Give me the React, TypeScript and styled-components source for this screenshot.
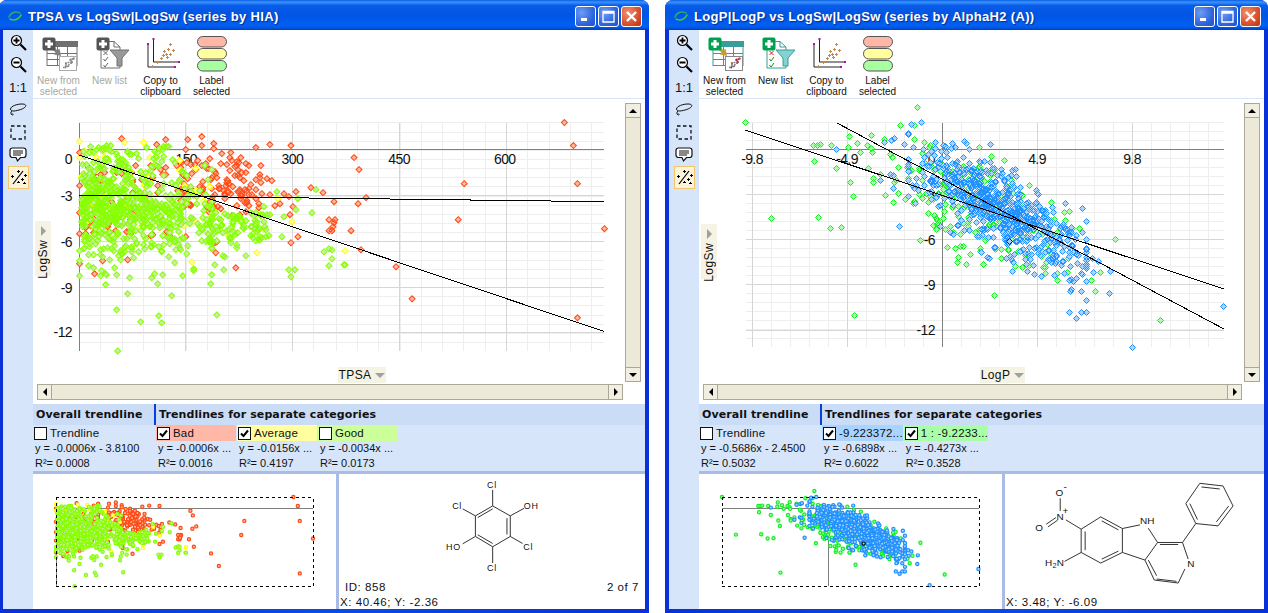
import React from "react";
import styled, { createGlobalStyle } from "styled-components";

type Pt = [number, number];
type Series = { stroke: string; fill: string; pts: Pt[] };

const Global = createGlobalStyle`
  html, body { margin: 0; padding: 0; background: #fff; overflow: hidden; }
  body { font-family: "Liberation Sans", Arial, sans-serif; }
`;

const Page = styled.div`
  display: flex;
  gap: 16px;
  width: 1269px;
  height: 613px;
  margin-left: -1px;
  overflow: hidden;
`;

const Win = styled.div<{ $w: number }>`
  display: flex;
  flex-direction: column;
  flex: 0 0 ${(p) => p.$w}px;
  height: 613px;
  border-radius: 8px 8px 0 0;
  overflow: hidden;
  background: linear-gradient(90deg, #0831d9 0, #0a4be6 50%, #0831d9 100%);
`;

const TitleBar = styled.div`
  display: flex;
  align-items: center;
  flex: 0 0 30px;
  box-sizing: border-box;
  padding: 2px 7px 0 9px;
  background: linear-gradient(180deg, #0a5fe0 0, #3a93ff 7%, #0a5ce8 18%, #0055e5 50%, #0060f2 85%, #0053e0 94%, #0039c8 100%);
`;

const TitleText = styled.span`
  flex: 1;
  margin-left: 6px;
  color: #fff;
  font: bold 13px "Liberation Sans", sans-serif;
  letter-spacing: 0.32px;
  white-space: nowrap;
  text-shadow: 1px 1px 1px #0a2a90;
`;

const CapButton = styled.div<{ $close?: boolean }>`
  flex: 0 0 21px;
  height: 21px;
  margin-left: 2px;
  box-sizing: border-box;
  border: 1px solid #fff;
  border-radius: 3px;
  background: ${(p) =>
    p.$close
      ? "radial-gradient(circle at 30% 30%, #f09070 0, #d8502c 60%, #b83010 100%)"
      : "radial-gradient(circle at 30% 30%, #6d9cf4 0, #2d62dc 65%, #2350c8 100%)"};
  display: flex;
  align-items: center;
  justify-content: center;
`;

const Body = styled.div`
  flex: 1;
  display: grid;
  grid-template-columns: 30px 1fr;
  margin: 0 4px 4px;
  min-height: 0;
`;

const SideBar = styled.div`
  display: flex;
  flex-direction: column;
  align-items: center;
  padding-top: 1px;
  background: #d6e5fa;
`;

const SideItem = styled.div<{ $active?: boolean }>`
  flex: 0 0 22.5px;
  width: 21px;
  box-sizing: border-box;
  display: flex;
  align-items: center;
  justify-content: center;
  color: #111;
  font-size: 13px;
  ${(p) => p.$active && "border: 1px solid #f6c46a; background: #fbf3dc;"}
`;

const Main = styled.div`
  display: flex;
  flex-direction: column;
  min-width: 0;
`;

const ToolBar = styled.div`
  display: flex;
  flex: 0 0 69px;
  box-sizing: border-box;
  background: #fff;
  border-bottom: 1px solid #d6e5fa;
`;

const ToolButton = styled.div<{ $off?: boolean }>`
  flex: 0 0 51px;
  display: flex;
  flex-direction: column;
  align-items: center;
  padding-top: 6px;
  box-sizing: border-box;
  color: ${(p) => (p.$off ? "#a8a8a0" : "#111")};
  font-size: 10px;
  line-height: 11px;
  text-align: center;
  svg { flex: 0 0 39px; display: block; }
`;

const PlotPane = styled.div`
  flex: 0 0 305px;
  box-sizing: border-box;
  display: grid;
  grid-template-columns: 1fr 16px;
  grid-template-rows: 1fr 16px;
  gap: 2px;
  padding: 4px;
  background: #fff;
`;

const ChartBox = styled.div`
  position: relative;
  min-width: 0;
  min-height: 0;
  svg { display: block; width: 100%; height: 100%; overflow: visible; }
`;

const AxisTagH = styled.div<{ $w: number; $right: number }>`
  position: absolute;
  bottom: -1px;
  right: ${(p) => p.$right}px;
  width: ${(p) => p.$w}px;
  height: 16px;
  background: #f5f3e3;
  display: flex;
  align-items: center;
  justify-content: center;
  gap: 4px;
  font-size: 12px;
  letter-spacing: 0.4px;
  color: #111;
`;

const AxisTagV = styled.div<{ $top: number }>`
  position: absolute;
  left: -2px;
  top: ${(p) => p.$top}px;
  width: 16px;
  height: 55px;
  background: #f5f3e3;
  display: flex;
  flex-direction: column;
  align-items: center;
  gap: 4px;
  padding-top: 5px;
  box-sizing: border-box;
  font-size: 12px;
  letter-spacing: 0.4px;
  color: #111;
  span { writing-mode: vertical-rl; transform: rotate(180deg); }
`;

const CaretDown = styled.i`
  width: 0;
  height: 0;
  border-left: 5px solid transparent;
  border-right: 5px solid transparent;
  border-top: 5px solid #a0a0a0;
`;

const CaretRight = styled.i`
  width: 0;
  height: 0;
  border-top: 5px solid transparent;
  border-bottom: 5px solid transparent;
  border-left: 5px solid #a0a0a0;
`;

const ScrollV = styled.div`
  display: flex;
  flex-direction: column;
  justify-content: space-between;
  box-sizing: border-box;
  border: 1px solid #aca899;
  background: #ece9d8;
`;

const ScrollH = styled.div`
  display: flex;
  justify-content: space-between;
  box-sizing: border-box;
  border: 1px solid #aca899;
  background: #ece9d8;
`;

const ScrollBtn = styled.div<{ $dir: "up" | "down" | "left" | "right"; }>`
  flex: 0 0 14px;
  height: 14px;
  box-sizing: border-box;
  background: #f1efe2;
  display: flex;
  align-items: center;
  justify-content: center;
  ${(p) => (p.$dir === "up" ? "border-bottom: 1px solid #aca899;" : "")}
  ${(p) => (p.$dir === "down" ? "border-top: 1px solid #aca899;" : "")}
  ${(p) => (p.$dir === "left" ? "border-right: 1px solid #aca899;" : "")}
  ${(p) => (p.$dir === "right" ? "border-left: 1px solid #aca899;" : "")}
  i {
    width: 0;
    height: 0;
    ${(p) => (p.$dir === "up" ? "border-left:4px solid transparent;border-right:4px solid transparent;border-bottom:4px solid #000;" : "")}
    ${(p) => (p.$dir === "down" ? "border-left:4px solid transparent;border-right:4px solid transparent;border-top:4px solid #000;" : "")}
    ${(p) => (p.$dir === "left" ? "border-top:4px solid transparent;border-bottom:4px solid transparent;border-right:4px solid #000;" : "")}
    ${(p) => (p.$dir === "right" ? "border-top:4px solid transparent;border-bottom:4px solid transparent;border-left:4px solid #000;" : "")}
  }
`;

const HeadRow = styled.div`
  flex: 0 0 21px;
  display: grid;
  grid-template-columns: 121px 1fr;
  gap: 2px;
`;

const HeadCell = styled.div`
  background: #cbdcf7;
  padding-left: 3px;
  display: flex;
  align-items: center;
  font: bold 11px "DejaVu Sans", sans-serif;
  letter-spacing: 0.1px;
  color: #111;
  white-space: nowrap;
`;

const TrendRow = styled.div`
  flex: 0 0 46px;
  display: flex;
  gap: 1px;
  background: #d6e5fa;
`;

const TrendCol = styled.div<{ $w: number }>`
  flex: 0 0 ${(p) => p.$w}px;
  font-size: 11px;
  color: #111;
  white-space: nowrap;
`;

const Legend = styled.div<{ $bg?: string }>`
  height: 16px;
  display: flex;
  align-items: center;
  gap: 3px;
  padding-left: 1px;
  background: ${(p) => p.$bg || "transparent"};
  font-size: 11.5px;
  letter-spacing: 0.2px;
`;

const Check = styled.div`
  flex: 0 0 13px;
  height: 13px;
  box-sizing: border-box;
  border: 1px solid #111;
  background: #fff;
  display: flex;
  align-items: center;
  justify-content: center;
`;

const EqLine = styled.div`
  height: 15px;
  line-height: 15px;
  padding-left: 2px;
`;

const Rule = styled.div`
  flex: 0 0 3px;
  background: #a9bce6;
`;

const Bottom = styled.div`
  flex: 1;
  display: grid;
  grid-template-columns: 303px 3px 1fr;
  min-height: 0;
  background: #fff;
`;

const MiniPane = styled.div`
  overflow: hidden;
  svg { display: block; }
`;

const VRule = styled.div`
  background: #a9bce6;
`;

const MolPane = styled.div`
  display: flex;
  flex-direction: column;
  min-width: 0;
  overflow: hidden;
  color: #111;
  font-size: 11.5px;
  letter-spacing: 0.55px;
`;

const MolPic = styled.div`
  flex: 1;
  display: flex;
  align-items: center;
  justify-content: center;
  min-height: 0;
`;

const InfoRow = styled.div`
  flex: 0 0 16px;
  display: flex;
  justify-content: space-between;
  align-items: center;
  padding: 0 6px;
`;

const Coord = styled.div`
  flex: 0 0 14px;
  line-height: 14px;
  padding-left: 1px;
`;

function rng(seed: number) {
  let a = seed;
  return () => {
    a |= 0;
    a = (a + 0x6d2b79f5) | 0;
    let t = Math.imul(a ^ (a >>> 15), 1 | a);
    t = (t + Math.imul(t ^ (t >>> 7), 61 | t)) ^ t;
    return ((t ^ (t >>> 14)) >>> 0) / 4294967296;
  };
}
const gaussFrom = (r: () => number) => () =>
  Math.sqrt(-2 * Math.log(r() + 1e-9)) * Math.cos(2 * Math.PI * r());

const z1 = (l: number[][]): Pt[] => l.map(([x, y]) => [34 + x / 3, 100 + y / 3]);
const z8 = (l: number[][]): Pt[] => l.map(([x, y]) => [340 + x / 3, 100 + y / 3]);
const z9 = (l: number[][]): Pt[] => l.map(([x, y]) => [700 + x / 3, 100 + y / 3]);
const z10 = (l: number[][]): Pt[] => l.map(([x, y]) => [980 + x / 3, 100 + y / 3]);

function buildLeft(): Series[] {
  const r = rng(11);
  const g = gaussFrom(r);
  const red: Pt[] = [
    ...z1([[264,114],[396,117],[369,132],[462,117],[504,108],[504,135],[456,147],[540,129],[540,144],[564,158],[591,156],[666,141],[708,132],[771,135],[609,182],[612,207],[519,204],[138,155],[138,255],[138,335],[138,400],[138,490],[183,519],[207,480],[282,477],[885,357],[903,357],[900,366],[885,390],[894,390],[897,378],[771,426],[792,408],[777,318],[768,342],[900,303],[867,276],[831,261],[786,273],[765,288],[750,279],[738,309],[723,315],[708,282],[699,234],[714,240],[606,501],[546,456],[543,426],[549,423],[549,381],[615,270],[625,280],[632,268],[620,285],[640,270],[666,268],[666,295],[676,310],[638,306],[636,215],[630,240]]),
    ...z8([[672,66],[699,135],[711,249],[792,384],[711,651],[372,249],[353,357],[216,594],[168,498],[63,447],[33,390],[54,309],[78,291],[57,207],[42,171]]),
  ];
  for (let i = 0; i < 110; i++) red.push([177 + r() * 85, 157 + r() * 58]);
  for (let i = 0; i < 80; i++) red.push([84 + r() * 110, 165 + r() * 72]);
  const yellow: Pt[] = [
    ...z1([[138,122],[153,150],[138,170],[210,152],[272,125],[330,126],[348,170],[438,180],[486,205],[510,300],[585,405],[474,483],[669,456],[774,363],[732,294],[687,384],[145,228]]),
    ...z8([[15,450]]),
  ];
  for (let i = 0; i < 28; i++) yellow.push([85 + r() * 130, 155 + r() * 75]);
  const green: Pt[] = [
    ...z1([[138,525],[201,525],[216,552],[282,579],[249,627],[321,663],[375,645],[384,666],[252,750],[549,642],[414,585],[372,549],[354,531],[363,519],[387,522],[288,531],[249,522],[243,501],[447,525],[480,510],[480,504],[543,492],[570,507],[573,468],[567,465],[636,465],[609,441],[609,432],[771,528],[765,507],[783,507],[870,453],[885,495],[894,474],[885,444],[894,447],[930,492],[171,138],[231,135],[189,147],[138,480],[138,450],[300,470],[405,468],[423,486],[441,447],[165,495],[180,500],[260,477],[750,348],[834,336],[786,327],[729,273],[846,267],[792,294],[708,342],[690,318],[744,408],[705,405]]),
    ...z8([[15,492]]),
  ];
  for (let i = 0; i < 520; i++) {
    const x = 82 + Math.min(Math.abs(g()) * 62, 130);
    green.push([x, 207 + g() * 21 + (x - 80) * 0.03]);
  }
  for (let i = 0; i < 90; i++) green.push([200 + r() * 67 , 212 + r() * 30]);
  for (let i = 0; i < 60; i++) green.push([82 + r() * 90, 144 + r() * 40]);
  for (let i = 0; i < 40; i++) green.push([84 + r() * 100, 236 + r() * 20]);
  return [
    { stroke: "#ff4a14", fill: "#ffb8a0", pts: red },
    { stroke: "#ffff00", fill: "#ffffb0", pts: yellow },
    { stroke: "#88ff00", fill: "#c8f0a0", pts: green },
  ];
}

function buildRight(): Series[] {
  const r = rng(27);
  const g = gaussFrom(r);
  const green: Pt[] = [
    ...z9([[135,66],[338,135],[350,135],[360,132],[393,135],[444,141],[447,108],[471,129],[501,135],[513,144],[516,156],[480,156],[552,117],[342,183],[408,204],[504,204],[450,246],[519,234],[519,246],[540,222],[459,288],[555,285],[579,306],[594,279],[576,171],[213,354],[354,351],[390,384],[423,381],[462,645],[660,420],[642,117],[672,126],[741,441],[765,444],[780,438],[771,486],[798,492],[849,492],[774,471],[708,387],[699,375],[735,387],[750,378],[780,402],[840,453],[620,200],[640,310],[685,340],[595,200]]),
    ...z10([[147,255],[213,306],[255,360],[222,357],[360,516],[42,585],[540,660],[207,480],[147,495],[127,501],[135,465],[85,450],[8,492]]),
  ];
  for (let i = 0; i < 190; i++) {
    const x = 985 + g() * 45;
    green.push([x, 205 + (x - 985) * 0.5 + g() * 24]);
  }
  const blue: Pt[] = [
    ...z9([[408,147],[552,126],[573,120],[582,114],[612,132],[597,378],[579,264],[540,240],[570,222],[579,225],[759,402],[750,396],[705,126],[757,128],[807,146],[730,134],[645,308]]),
    ...z10([[93,225],[171,279],[306,396],[288,405],[255,387],[336,474],[354,483],[339,516],[390,513],[303,519],[306,522],[318,543],[267,540],[252,519],[222,525],[162,522],[96,513],[99,486],[78,474],[303,573],[387,579],[267,636],[303,636],[288,654],[456,741],[729,618],[291,489],[22,470],[28,474]]),
  ];
  for (let i = 0; i < 620; i++) {
    const x = 1000 + g() * 42;
    const cx = Math.max(908, Math.min(1086, x));
    blue.push([cx, 208 + (cx - 1000) * 0.56 + g() * 18]);
  }
  return [
    { stroke: "#12f022", fill: "#a8ffa8", pts: green },
    { stroke: "#2090ff", fill: "#a8d4ff", pts: blue },
    { stroke: "#111", fill: "#9fd0ff", pts: z10([[87, 423]]) },
  ];
}

const range = (from: number, to: number, step: number) => {
  const out: number[] = [];
  for (let v = from; v <= to + 0.01; v += step) out.push(Math.round(v) + 0.5);
  return out;
};

type ChartSpec = {
  vb: string;
  x0: number; x1: number; y0: number; y1: number;
  minorX: number[]; majorX: number[];
  minorY: number[]; majorY: number[];
  axisX: number; axisY: number; axisYTop: number; axisYBottom: number;
  xLabels: [string, number][];
  yLabels: [string, number, number][];
  lines: [number, number, number, number][];
  series: Series[];
};

const Scatter = ({ spec }: { spec: ChartSpec }) => (
  <svg viewBox={spec.vb} preserveAspectRatio="xMinYMin meet">
    <g shapeRendering="crispEdges" strokeWidth="1">
      <g stroke="#eeeeee">
        {spec.minorX.map((x) => <line key={x} x1={x} x2={x} y1={spec.y0} y2={spec.y1} />)}
        {spec.minorY.map((y) => <line key={y} x1={spec.x0} x2={spec.x1} y1={y} y2={y} />)}
      </g>
      <g stroke="#d6d6d6">
        {spec.majorX.map((x) => <line key={x} x1={x} x2={x} y1={spec.y0} y2={spec.y1} />)}
        {spec.majorY.map((y) => <line key={y} x1={spec.x0} x2={spec.x1} y1={y} y2={y} />)}
      </g>
      <g stroke="#808080">
        <line x1={spec.x0} x2={spec.x1} y1={spec.axisX} y2={spec.axisX} />
        <line x1={spec.axisY} x2={spec.axisY} y1={spec.axisYTop} y2={spec.axisYBottom} />
      </g>
    </g>
    <g fontFamily='"Liberation Sans", sans-serif' fontSize="14" letterSpacing="-0.6" fill="#111">
      {spec.xLabels.map(([t, x]) => <text key={t} x={x} y={164} textAnchor="middle">{t}</text>)}
      {spec.yLabels.map(([t, x, y]) => <text key={t} x={x} y={y} textAnchor="end">{t}</text>)}
    </g>
    {spec.series.map((s, si) => (
      <path
        key={si}
        stroke={s.stroke}
        fill={s.fill}
        strokeWidth="1"
        d={s.pts
          .map(([x, y]) => {
            const X = Math.round(x) + 0.5;
            const Y = Math.round(y) + 0.5;
            return `M${X} ${Y - 3}L${X + 3} ${Y}L${X} ${Y + 3}L${X - 3} ${Y}Z`;
          })
          .join("")}
      />
    ))}
    <g stroke="#000" strokeWidth="1" shapeRendering="crispEdges">
      {spec.lines.map(([a, b, c, d], i) => <line key={i} x1={a} y1={b} x2={c} y2={d} />)}
    </g>
  </svg>
);

type MiniSpec = {
  vx: number; left: number; right: number; axisV: number; vTop: number;
  sx: number; ox: number; series: Series[];
};

const Mini = ({ spec }: { spec: MiniSpec }) => (
  <svg width="303" height="135" viewBox={`${spec.vx} 474 303 135`}>
    <g stroke="#808080" shapeRendering="crispEdges">
      <line x1={spec.left} x2={spec.right} y1={508.5} y2={508.5} />
      <line x1={spec.axisV} x2={spec.axisV} y1={spec.vTop} y2={586} />
    </g>
    {spec.series.map((s, si) => (
      <g key={si} stroke={s.stroke} fill={s.fill} strokeWidth="1.2">
        {s.pts.map(([x, y], i) => (
          <circle
            key={i}
            cx={spec.left + (x - spec.ox) * spec.sx}
            cy={497 + (y - 122) * 0.3917}
            r="1.6"
          />
        ))}
      </g>
    ))}
    <rect
      x={spec.left}
      y={497.5}
      width={spec.right - spec.left}
      height={89}
      fill="none"
      stroke="#000"
      strokeDasharray="3 3"
      shapeRendering="crispEdges"
    />
  </svg>
);

const leftSeries = buildLeft();
const rightSeries = buildRight();

const leftSpec: ChartSpec = {
  vb: "38 103 585 279",
  x0: 80, x1: 604, y0: 123, y1: 351,
  minorX: range(80, 604, 21.3), majorX: range(80, 604, 106.4),
  minorY: range(122.4, 350, 9.15), majorY: [195.5, 241.5, 287.5, 332.5],
  axisX: 149.5, axisY: 80.5, axisYTop: 123, axisYBottom: 351,
  xLabels: [["150", 187], ["300", 293], ["450", 399.5], ["600", 505]],
  yLabels: [["0", 73, 164], ["-3", 73, 201], ["-6", 73, 247], ["-9", 73, 293], ["-12", 73, 337]],
  lines: [[80, 155, 604, 331], [80, 195, 604, 201.5]],
  series: leftSeries,
};

const rightSpec: ChartSpec = {
  vb: "703 103 539 279",
  x0: 746, x1: 1224, y0: 123, y1: 347,
  minorX: range(752.4, 1224, 19), majorX: [752.5, 847.5, 1037.5, 1132.5],
  minorY: range(122.4, 347, 9), majorY: [194.5, 239.5, 284.5, 330.5],
  axisX: 149.5, axisY: 942.5, axisYTop: 123, axisYBottom: 347,
  xLabels: [["-9.8", 752], ["-4.9", 847], ["4.9", 1037], ["9.8", 1132]],
  yLabels: [["0", 935, 164], ["-3", 935, 200], ["-6", 935, 245], ["-9", 935, 290], ["-12", 935, 335]],
  lines: [[745, 130, 1224, 289], [837, 123, 1224, 329]],
  series: rightSeries,
};

const Swirl = () => (
  <svg width="14" height="12" viewBox="0 0 14 12" fill="none" strokeWidth="1.6" strokeLinecap="round">
    <path d="M1 7C3 2 8 1 12 3" stroke="#2aa37a" />
    <path d="M13 5C10 10 6 11 2 9" stroke="#39c44a" />
  </svg>
);

const Tick = () => (
  <svg width="11" height="11" viewBox="0 0 11 11">
    <path d="M2 5.5L4.5 8L9 2.5" fill="none" stroke="#000" strokeWidth="2" />
  </svg>
);

const Magnifier = ({ plus }: { plus?: boolean }) => (
  <svg width="17" height="17" viewBox="0 0 17 17">
    <circle cx="6.5" cy="6.5" r="5" fill="#fff" stroke="#000" strokeWidth="1.2" />
    <path d="M10.5 10.5L16 16" stroke="#000" strokeWidth="2.2" />
    <path d="M3.5 6.5H9.5" stroke="#000" strokeWidth="1.8" />
    {plus && <path d="M6.5 3.5V9.5" stroke="#000" strokeWidth="1.8" />}
  </svg>
);

const Lasso = () => (
  <svg width="18" height="14" viewBox="0 0 18 14" fill="none" stroke="#111" strokeWidth="1">
    <path d="M1.5 6C2 3 8 1 13 1C16 1 17.5 2 16.5 3.5C15 6 9 7.5 5 8C3 8 1.5 7.5 1.5 6Z" />
    <path d="M3 8C1.5 9 1.5 11 3 12C4 12.5 4.5 11 3.5 10.5" />
  </svg>
);

const DashBox = () => (
  <svg width="16" height="15" viewBox="0 0 16 15">
    <rect x="1" y="1" width="14" height="13" fill="none" stroke="#111" strokeWidth="1.3" strokeDasharray="3.5 2.5" />
  </svg>
);

const Note = () => (
  <svg width="18" height="16" viewBox="0 0 18 16">
    <path d="M3.5 1H14.5C16 1 17 2 17 3.5V8C17 9.5 16 10.5 14.5 10.5H11.5L8.5 14L7 10.5H3.5C2 10.5 1 9.5 1 8V3.5C1 2 2 1 3.5 1Z" fill="#fff" stroke="#111" strokeWidth="1.2" />
    <path d="M4 4H14M4 6H14M4 8H12" stroke="#111" strokeWidth="1" />
  </svg>
);

const Wand = () => (
  <svg width="17" height="17" viewBox="0 0 17 17">
    <path d="M3 15L13 2" stroke="#000" strokeWidth="1.2" />
    <path d="M1 7H4M2.5 5.5V8.5M7 2H10M8.5 .5V3.500M11 10H14M12.500 8.500V11.500M14 6H16.500M15.200 5V7.500M7 13H9.500M8.200 11.800V14.300M13 14H16M14.500 12.800V15.300" stroke="#000" strokeWidth="1" shapeRendering="crispEdges" />
  </svg>
);

const Badge = ({ x, color }: { x: number; color: string }) => (
  <g>
    <rect x={x} y="1.500" width="13" height="13" rx="2" fill={color} />
    <path d={`M${x + 6.5} 4V12M${x + 2.5} 8H${x + 10.5}`} stroke="#fff" strokeWidth="3" />
  </g>
);

const TableIcon = ({ on }: { on: boolean }) => {
  const c = on ? "#3b9c9c" : "#707070";
  const noise = rng(5);
  const dots = Array.from({ length: 26 }, () => {
    const t = noise();
    return [23 + t * 12, 31 - t * 9 + (noise() - 0.5) * 5];
  });
  return (
    <svg width="40" height="39" viewBox="0 0 40 39">
      <rect x="8" y="5.500" width="30" height="24" fill="#fff" stroke={c} />
      <rect x="12" y="5" width="27" height="6" fill={c} />
      <path d="M8 17.500H38M8 23.500H38M18.500 11V29.500M28.500 11V29.500" stroke={c} fill="none" />
      <rect x="20.500" y="20.500" width="17" height="14" fill="#fff" stroke={on ? "#888" : "#aaa"} />
      <g fill={on ? "#777" : "#888"}>
        {dots.map(([x, y], i) => (
          <rect key={i} x={x} y={y} width="1.500" height="1.500" fill={on && i % 3 === 0 ? "#d01020" : undefined} />
        ))}
      </g>
      <path d="M22 20L15 18.500L16.500 16.500L13 13L15 11L18.500 14.500L20.500 12.500Z" fill={on ? "#c0a030" : "#808080"} />
      <Badge x={3.500} color={on ? "#00a050" : "#555"} />
    </svg>
  );
};

const ListIcon = ({ on }: { on: boolean }) => {
  const c = on ? "#3b9c9c" : "#707070";
  return (
    <svg width="40" height="39" viewBox="0 0 40 39">
      <path d="M11 5.500H24L30 11V32H11Z" fill="#fff" stroke={c} />
      <path d="M24 5.500V11H30" fill="none" stroke={c} />
      <path d="M20 14H39L32 22V30H27V22Z" fill={on ? "#85d2d2" : "#999"} stroke={c} />
      <path d="M13.500 15L17.500 19M17.500 15L13.500 19" stroke={on ? "#e02010" : "#666"} />
      <path d="M13.500 23L15 25L18 21M13.500 29L15 31L18 27" stroke={on ? "#109020" : "#666"} fill="none" />
      <Badge x={6.500} color={on ? "#00a050" : "#555"} />
    </svg>
  );
};

const CopyIcon = () => (
  <svg width="40" height="39" viewBox="0 0 40 39">
    <path d="M7 8V31H34M12.500 3V26H38" fill="none" stroke="#222" />
    <g fill="#b010a0">
      <rect x="6" y="7" width="2" height="2" />
      <rect x="11.500" y="2" width="2" height="2" />
      <rect x="33" y="30" width="2" height="2" />
      <rect x="37" y="25" width="2" height="2" />
    </g>
    <path
      d="M10 30h3M11.500 28.500v3M15 26h3M16.500 24.500v3M19 22h3M20.500 20.500v3M22 15h3M23.500 13.500v3M24 18h3M25.500 16.500v3M26 13h3M27.500 11.500v3M28 18h3M29.500 16.500v3M28 8h3M29.500 6.500v3M21 19h3M22.500 17.500v3M25 21h3M26.500 19.500v3M31 14h3M32.500 12.500v3"
      stroke="#c08a50"
      shapeRendering="crispEdges"
    />
  </svg>
);

const Pill = ({ y, fill }: { y: number; fill: string }) => (
  <rect x="5.500" y={y} width="29" height="10.500" rx="5.200" fill={fill} stroke="#555" />
);

const LabelIcon = () => (
  <svg width="40" height="39" viewBox="0 0 40 39">
    <Pill y={0.5} fill="#ffb8a8" />
    <Pill y={12.5} fill="#ffffa0" />
    <Pill y={24.5} fill="#a8ffa0" />
  </svg>
);

const Mol = styled.svg`
  display: block;
  text { font-family: "Liberation Sans", sans-serif; fill: #111; }
  path { fill: none; stroke: #333; stroke-width: 3; }
`;

const Molecule1 = () => (
  <Mol width="95" height="93" viewBox="345 355 285 280">
    <path d="M488 433L541 463V525L488 556L436 525V463ZM488 433V385M541 463L583 440M541 525L578 546M488 556V605M436 525L398 547M436 463L398 442" />
    <path d="M443 468L488 442M531 470V519M443 520L488 546" />
    <g fontSize="27" letterSpacing="2">
      <text x="486" y="379" textAnchor="middle">Cl</text>
      <text x="604" y="442" textAnchor="middle">OH</text>
      <text x="595" y="565" textAnchor="middle">Cl</text>
      <text x="486" y="628" textAnchor="middle">Cl</text>
      <text x="370" y="565" textAnchor="middle">HO</text>
      <text x="381" y="442" textAnchor="middle">Cl</text>
    </g>
  </Mol>
);

const Molecule2 = () => (
  <Mol width="200" height="108" viewBox="700 250 600 325">
    <path d="M1195 257L1265 265L1295 325L1250 385L1183 378L1153 318ZM1200 268L1255 274M1282 325L1245 373M1188 366L1165 318" />
    <path d="M1183 378L1143 435L1160 485M1143 435H1068L1030 488L1058 548L1130 557L1150 515M1130 441H1075M1040 488L1065 535M1065 545L1125 552" />
    <path d="M1068 435L1040 392M1015 382L962 393V465L1030 488M962 465L897 497L838 465V395L897 358L962 393M900 370L950 397M850 402V458M900 485L950 461M838 395L792 367M775 340V302M838 465L788 492" />
    <path d="M762 360L733 380M767 368L738 388" />
    <g fontSize="30">
      <text x="1037" y="378" textAnchor="middle">NH</text>
      <text x="1168" y="510" textAnchor="middle">N</text>
      <text x="775" y="366" textAnchor="middle">N</text>
      <text x="791" y="350" textAnchor="middle">+</text>
      <text x="773" y="294" textAnchor="middle">O</text>
      <text x="790" y="276" textAnchor="middle">-</text>
      <text x="712" y="401" textAnchor="middle">O</text>
      <text x="758" y="507" textAnchor="middle">H<tspan fontSize="22" dy="5">2</tspan><tspan dy="-5">N</tspan></text>
    </g>
  </Mol>
);

type Cat = { bg: string; name: string; checked: boolean; eq: string; r2: string };

type WinProps = {
  w: number;
  title: string;
  enabled: boolean;
  spec: ChartSpec;
  mini: MiniSpec;
  axisX: string;
  tagW: number;
  tagRight: number;
  tagTop: number;
  eq: string;
  r2: string;
  cats: Cat[];
  children: React.ReactNode;
};

const AppWindow = (p: WinProps) => (
  <Win $w={p.w}>
    <TitleBar>
      <Swirl />
      <TitleText>{p.title}</TitleText>
      <CapButton>
        <svg width="11" height="11" viewBox="0 0 11 11"><rect x="1" y="7" width="6" height="3" fill="#fff" /></svg>
      </CapButton>
      <CapButton>
        <svg width="13" height="13" viewBox="0 0 13 13"><path d="M1 1.500H12V12H1Z M1 3H12" fill="none" stroke="#fff" strokeWidth="1.300" /></svg>
      </CapButton>
      <CapButton $close>
        <svg width="13" height="13" viewBox="0 0 13 13"><path d="M2 2L11 11M11 2L2 11" stroke="#fff" strokeWidth="2.400" /></svg>
      </CapButton>
    </TitleBar>
    <Body>
      <SideBar>
        <SideItem><Magnifier plus /></SideItem>
        <SideItem><Magnifier /></SideItem>
        <SideItem>1:1</SideItem>
        <SideItem><Lasso /></SideItem>
        <SideItem><DashBox /></SideItem>
        <SideItem><Note /></SideItem>
        <SideItem $active><Wand /></SideItem>
      </SideBar>
      <Main>
        <ToolBar>
          <ToolButton $off={!p.enabled}><TableIcon on={p.enabled} />New from<br />selected</ToolButton>
          <ToolButton $off={!p.enabled}><ListIcon on={p.enabled} />New list</ToolButton>
          <ToolButton><CopyIcon />Copy to<br />clipboard</ToolButton>
          <ToolButton><LabelIcon />Label<br />selected</ToolButton>
        </ToolBar>
        <PlotPane>
          <ChartBox>
            <Scatter spec={p.spec} />
            <AxisTagV $top={p.tagTop}><CaretRight /><span>LogSw</span></AxisTagV>
            <AxisTagH $w={p.tagW} $right={p.tagRight}>{p.axisX}<CaretDown /></AxisTagH>
          </ChartBox>
          <ScrollV>
            <ScrollBtn $dir="up"><i /></ScrollBtn>
            <ScrollBtn $dir="down"><i /></ScrollBtn>
          </ScrollV>
          <ScrollH>
            <ScrollBtn $dir="left"><i /></ScrollBtn>
            <ScrollBtn $dir="right"><i /></ScrollBtn>
          </ScrollH>
        </PlotPane>
        <HeadRow>
          <HeadCell>Overall trendline</HeadCell>
          <HeadCell>Trendlines for separate categories</HeadCell>
        </HeadRow>
        <TrendRow>
          <TrendCol $w={122}>
            <Legend><Check />Trendline</Legend>
            <EqLine>{p.eq}</EqLine>
            <EqLine>{p.r2}</EqLine>
          </TrendCol>
          {p.cats.map((c) => (
            <TrendCol key={c.name} $w={80}>
              <Legend $bg={c.bg}><Check>{c.checked && <Tick />}</Check>{c.name}</Legend>
              <EqLine>{c.eq}</EqLine>
              <EqLine>{c.r2}</EqLine>
            </TrendCol>
          ))}
        </TrendRow>
        <Rule />
        <Bottom>
          <MiniPane><Mini spec={p.mini} /></MiniPane>
          <VRule />
          <MolPane>{p.children}</MolPane>
        </Bottom>
      </Main>
    </Body>
  </Win>
);

export default function App() {
  return (
    <>
      <Global />
      <Page>
        <AppWindow
          w={650}
          title="TPSA vs LogSw|LogSw (series by HIA)"
          enabled={false}
          spec={leftSpec}
          mini={{ vx: 34, left: 57, right: 314, axisV: 57.5, vTop: 508, sx: 0.4905, ox: 80, series: leftSeries }}
          axisX="TPSA"
          tagW={48}
          tagRight={237}
          tagTop={118}
          eq="y = -0.0006x - 3.8100"
          r2="R²= 0.0008"
          cats={[
            { bg: "#ffb8a8", name: "Bad", checked: true, eq: "y = -0.0006x ...", r2: "R²= 0.0016" },
            { bg: "#ffffa0", name: "Average", checked: true, eq: "y = -0.0156x ...", r2: "R²= 0.4197" },
            { bg: "#ccff99", name: "Good", checked: false, eq: "y = -0.0034x ...", r2: "R²= 0.0173" },
          ]}
        >
          <MolPic><Molecule1 /></MolPic>
          <InfoRow><span>ID: 858</span><span>2 of 7</span></InfoRow>
          <Coord>X: 40.46; Y: -2.36</Coord>
        </AppWindow>
        <AppWindow
          w={603}
          title="LogP|LogP vs LogSw|LogSw (series by AlphaH2 (A))"
          enabled
          spec={rightSpec}
          mini={{ vx: 699, left: 722, right: 979, axisV: 828.5, vTop: 508, sx: 0.5365, ox: 745, series: rightSeries }}
          axisX="LogP"
          tagW={45}
          tagRight={217}
          tagTop={121}
          eq="y = -0.5686x - 2.4500"
          r2="R²= 0.5032"
          cats={[
            { bg: "#a8d4ff", name: "-9.223372...", checked: true, eq: "y = -0.6898x ...", r2: "R²= 0.6022" },
            { bg: "#a8ffa8", name: "1 : -9.2233...", checked: true, eq: "y = -0.4273x ...", r2: "R²= 0.3528" },
          ]}
        >
          <MolPic><Molecule2 /></MolPic>
          <Coord>X: 3.48; Y: -6.09</Coord>
        </AppWindow>
      </Page>
    </>
  );
}
